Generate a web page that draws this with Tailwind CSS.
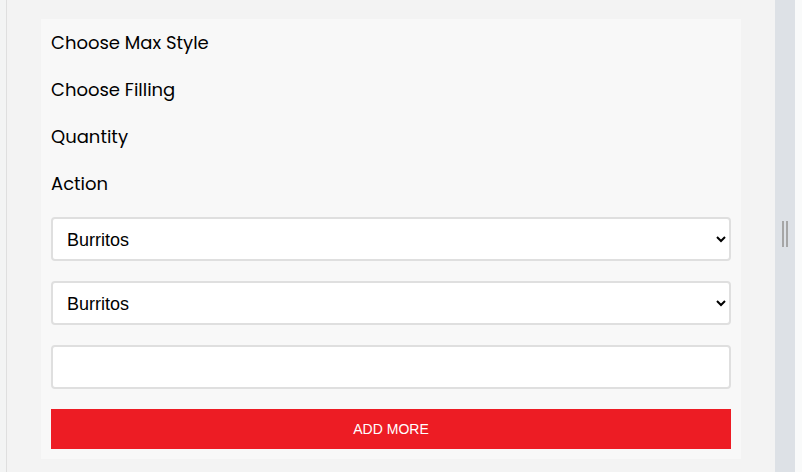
<!DOCTYPE html>
<html lang="en">
<head>
<meta charset="utf-8">
<meta name="viewport" content="width=device-width, initial-scale=1">
<title>Order</title>
<script src="https://cdn.jsdelivr.net/npm/@tailwindcss/browser@4"></script>
</head>
<body class="flex min-h-screen bg-[#f3f4f4] text-black">
  <div class="w-[6px] shrink-0"></div>
  <main class="min-w-0 grow border-l border-[#dfdfdf] bg-[#f3f3f3] pt-[19px] pr-[34px] pb-[13px] pl-[34px]">
    <form class="flex flex-col gap-5 bg-[#f8f8f8] p-[10px] font-['Liberation_Sans',Arial,sans-serif] text-[18px]">
      <label for="style" class="font-[Poppins,Inter,sans-serif] leading-[27px]">Choose Max Style</label>
      <label for="filling" class="font-[Poppins,Inter,sans-serif] leading-[27px]">Choose Filling</label>
      <label for="quantity" class="font-[Poppins,Inter,sans-serif] leading-[27px]">Quantity</label>
      <label for="add" class="font-[Poppins,Inter,sans-serif] leading-[27px]">Action</label>
      <select id="style" class="h-11 w-full rounded-[4px] border-2 border-[#dfdfdf] bg-white pt-[2px] pl-[10px]">
        <option>Burritos</option>
      </select>
      <select id="filling" class="h-11 w-full rounded-[4px] border-2 border-[#dfdfdf] bg-white pt-[2px] pl-[10px]">
        <option>Burritos</option>
      </select>
      <input id="quantity" type="text" class="h-11 w-full rounded-[4px] border-2 border-[#dfdfdf] bg-white px-[14px]">
      <button id="add" type="button" class="h-10 w-full bg-[#ed1c24] text-[14px] text-white">ADD MORE</button>
    </form>
  </main>
  <div role="separator" aria-orientation="vertical" class="flex w-5 shrink-0 items-center justify-center gap-[2px] bg-[#dde1e6] pb-1">
    <span class="h-[26px] w-[2px] bg-[#a6a6a6]"></span>
    <span class="h-[26px] w-[2px] bg-[#a6a6a6]"></span>
  </div>
  <div class="w-[7px] shrink-0 bg-[#f9fafa]"></div>
</body>
</html>
